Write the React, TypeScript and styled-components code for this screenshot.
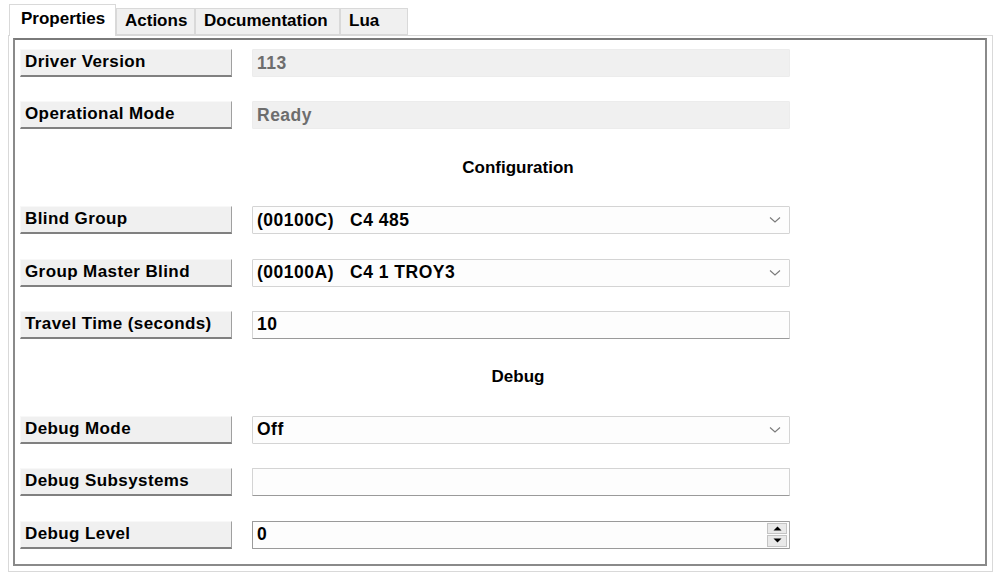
import React from 'react';
import styled, { createGlobalStyle } from 'styled-components';

const GlobalStyle = createGlobalStyle`
  html, body {
    margin: 0;
    padding: 0;
    background: #ffffff;
  }
  body {
    font-family: "Liberation Sans", Arial, sans-serif;
    font-weight: bold;
    color: #000;
  }
`;

const Window = styled.div`
  width: 999px;
  height: 577px;
  box-sizing: border-box;
  padding: 4px 6px 5px 8px;
  display: flex;
  flex-direction: column;
`;

const TabStrip = styled.div`
  display: flex;
  align-items: flex-end;
  height: 31px;
  padding-left: 1px;
  position: relative;
  z-index: 1;
`;

const Tab = styled.div<{ $active?: boolean; $width: number }>`
  box-sizing: border-box;
  width: ${(p) => p.$width}px;
  height: ${(p) => (p.$active ? '32px' : '27px')};
  margin-bottom: ${(p) => (p.$active ? '-1px' : '0')};
  padding: ${(p) => (p.$active ? '4px 0 0 11px' : '2px 0 0 8px')};
  background: ${(p) => (p.$active ? '#ffffff' : '#f0f0f0')};
  border: 1px solid #d9d9d9;
  border-bottom: ${(p) => (p.$active ? 'none' : '1px solid #d9d9d9')};
  font-size: 17px;
  font-weight: bold;
  white-space: nowrap;
`;

const Panel = styled.div`
  flex: 1;
  border: 1px solid #d9d9d9;
  background: #ffffff;
  padding: 2px 5px 5px 4px;
  display: flex;
`;

const Sunken = styled.div`
  flex: 1;
  border: 2px solid #8a8a8a;
  border-top-color: #7a7a7a;
  padding: 9px 0 0 5px;
`;

const Grid = styled.div`
  display: grid;
  grid-template-columns: 212px 538px;
  column-gap: 20px;
  grid-auto-rows: 28px;
  row-gap: 24.4px;
`;

const LabelButton = styled.div`
  box-sizing: border-box;
  height: 28px;
  background: #f0f0f0;
  border-top: 1px solid #f8f8f8;
  border-left: 1px solid #f8f8f8;
  border-right: 1px solid #a0a0a0;
  border-bottom: 2px solid #808080;
  font-size: 17px;
  letter-spacing: 0.4px;
  line-height: 24px;
  padding-left: 4px;
  white-space: nowrap;
`;

const Heading = styled.div`
  grid-column: 1 / span 2;
  text-align: center;
  padding-left: 226px;
  font-size: 17px;
  line-height: 28px;
`;

const Field = styled.div<{ $disabled?: boolean; $variant?: 'combo' | 'text' | 'spin' }>`
  box-sizing: border-box;
  height: 28px;
  display: flex;
  align-items: center;
  background: ${(p) => (p.$disabled ? '#f0f0f0' : '#fdfdfd')};
  color: ${(p) => (p.$disabled ? '#6d6d6d' : '#000')};
  border: ${(p) =>
    p.$variant === 'spin' ? '1px solid #a8a8a8' : p.$disabled ? '1px solid #ececec' : '1px solid #d4d4d4'};
  border-bottom-color: ${(p) => (p.$variant === 'text' || p.$variant === 'spin' ? '#9a9a9a' : undefined)};
  border-left-color: ${(p) => (p.$variant === 'spin' ? '#9a9a9a' : undefined)};
  border-top-color: ${(p) => (p.$variant === 'spin' ? '#9a9a9a' : undefined)};
  border-radius: 1px;
  padding-left: 4px;
  font-size: 17.5px;
  letter-spacing: 0.5px;
`;

const FieldText = styled.span`
  flex: 1;
  white-space: pre;
`;

const Chevron = styled.svg`
  width: 12px;
  height: 8px;
  margin-right: 8px;
`;

const Spinner = styled.div`
  display: flex;
  flex-direction: column;
  width: 20px;
  height: 24px;
  margin-right: 2px;
  gap: 1px;
`;

const SpinButton = styled.div`
  flex: 1;
  background: #e9e9e9;
  border: 1px solid #c4c4c4;
  display: flex;
  align-items: center;
  justify-content: center;
`;

const ChevronDown = () => (
  <Chevron viewBox="0 0 12 8">
    <path d="M1 1.5 L6 6 L11 1.5" fill="none" stroke="#7a7a7a" strokeWidth="1.1" />
  </Chevron>
);

const Arrow = ({ up }: { up?: boolean }) => (
  <svg width="9" height="5" viewBox="0 0 9 5">
    <path d={up ? 'M0.5 4.5 L4.5 0.5 L8.5 4.5 Z' : 'M0.5 0.5 L4.5 4.5 L8.5 0.5 Z'} fill="#000" />
  </svg>
);

type Row =
  | { kind: 'heading'; text: string }
  | { kind: 'field'; label: string; value: string; type: 'disabled' | 'combo' | 'text' | 'spin' };

const rows: Row[] = [
  { kind: 'field', label: 'Driver Version', value: '113', type: 'disabled' },
  { kind: 'field', label: 'Operational Mode', value: 'Ready', type: 'disabled' },
  { kind: 'heading', text: 'Configuration' },
  { kind: 'field', label: 'Blind Group', value: '(00100C)   C4 485', type: 'combo' },
  { kind: 'field', label: 'Group Master Blind', value: '(00100A)   C4 1 TROY3', type: 'combo' },
  { kind: 'field', label: 'Travel Time (seconds)', value: '10', type: 'text' },
  { kind: 'heading', text: 'Debug' },
  { kind: 'field', label: 'Debug Mode', value: 'Off', type: 'combo' },
  { kind: 'field', label: 'Debug Subsystems', value: '', type: 'text' },
  { kind: 'field', label: 'Debug Level', value: '0', type: 'spin' },
];

const tabs = [
  { label: 'Properties', width: 107 },
  { label: 'Actions', width: 79 },
  { label: 'Documentation', width: 145 },
  { label: 'Lua', width: 68 },
];

const App = () => {
  return (
    <>
      <GlobalStyle />
      <Window>
        <TabStrip>
          {tabs.map((t, i) => (
            <Tab key={t.label} $active={i === 0} $width={t.width}>
              {t.label}
            </Tab>
          ))}
        </TabStrip>
        <Panel>
          <Sunken>
            <Grid>
              {rows.map((row, i) =>
                row.kind === 'heading' ? (
                  <Heading key={i}>{row.text}</Heading>
                ) : (
                  <React.Fragment key={i}>
                    <LabelButton>{row.label}</LabelButton>
                    <Field
                      $disabled={row.type === 'disabled'}
                      $variant={row.type === 'disabled' ? undefined : row.type}
                    >
                      <FieldText>{row.value}</FieldText>
                      {row.type === 'combo' && <ChevronDown />}
                      {row.type === 'spin' && (
                        <Spinner>
                          <SpinButton>
                            <Arrow up />
                          </SpinButton>
                          <SpinButton>
                            <Arrow />
                          </SpinButton>
                        </Spinner>
                      )}
                    </Field>
                  </React.Fragment>
                )
              )}
            </Grid>
          </Sunken>
        </Panel>
      </Window>
    </>
  );
};

export default App;
